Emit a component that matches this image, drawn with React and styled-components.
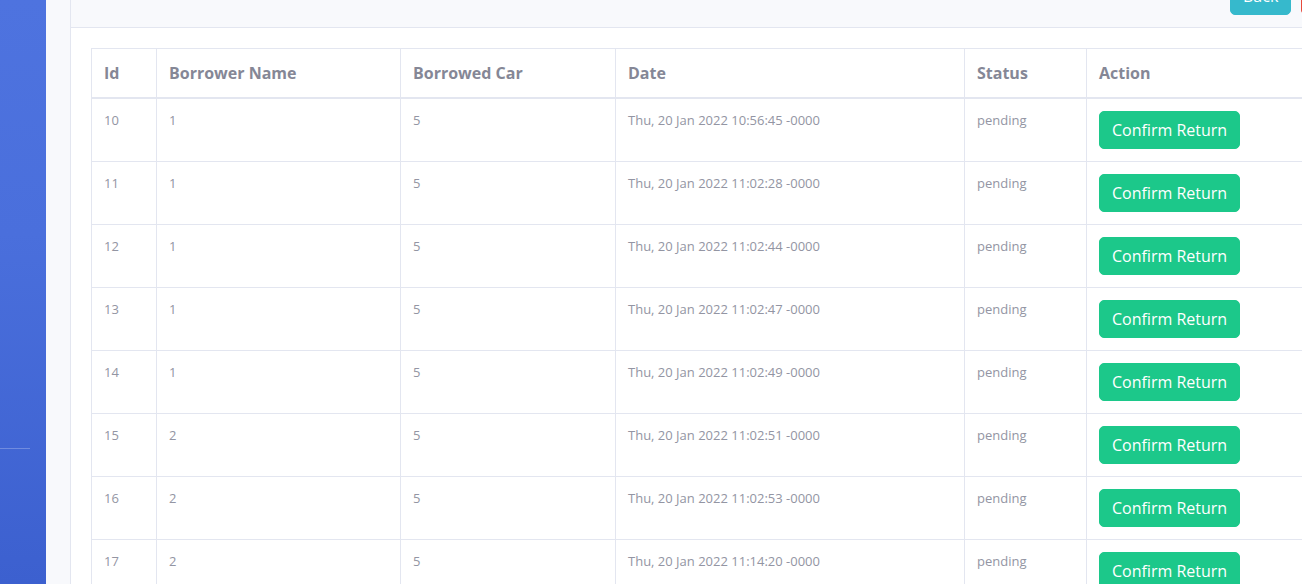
import React from "react";
import styled, { createGlobalStyle } from "styled-components";

const GlobalStyle = createGlobalStyle`
  html, body {
    margin: 0;
    padding: 0;
    overflow: hidden;
    background: #f8f9fc;
  }
  body {
    font-family: "Open Sans", "Noto Sans", sans-serif;
  }
  * { box-sizing: border-box; }
`;

const Wrapper = styled.div`
  display: flex;
  width: 1302px;
  height: 584px;
  overflow: hidden;
`;

const Sidebar = styled.aside`
  flex: 0 0 46px;
  height: 100%;
  background: linear-gradient(180deg, #4e73df 0%, #4a6fdc 40%, #3c60cf 100%);
  display: flex;
  flex-direction: column;
  padding-top: 448px;
`;

const Divider = styled.hr`
  margin: 0 16px 0 0;
  border: 0;
  border-top: 1px solid rgba(255, 255, 255, 0.25);
  height: 0;
`;

const Content = styled.main`
  flex: 1 1 auto;
  min-width: 0;
  padding: 0 0 0 24px;
  background: #f8f9fc;
  overflow: hidden;
`;

const Card = styled.section`
  width: 1400px;
  background: #fff;
  border-left: 1px solid #e3e6f0;
`;

const CardHeader = styled.header`
  height: 28px;
  background: #f8f9fc;
  border-bottom: 1px solid #e3e6f0;
  display: flex;
  align-items: flex-end;
  padding: 0 0 12px 1159px;
  gap: 10px;
  overflow: hidden;
`;

const HeaderButton = styled.button`
  flex: 0 0 auto;
  height: 38px;
  padding: 6px 12px;
  border: 1px solid ${(p) => p.$bg};
  border-radius: 5px;
  background: ${(p) => p.$bg};
  color: #fff;
  font-family: inherit;
  font-size: 16px;
  line-height: 24px;
  width: ${(p) => p.$w}px;
`;

const CardBody = styled.div`
  padding: 20px 20px 0 20px;
`;

const Table = styled.table`
  border-collapse: collapse;
  table-layout: fixed;
  width: 1320px;
  color: #858796;
`;

const Th = styled.th`
  text-align: left;
  font-size: 16px;
  font-weight: 700;
  line-height: 24px;
  padding: 12px;
  border: 1px solid #e3e6f0;
  border-bottom: 2px solid #e3e6f0;
  vertical-align: bottom;
  width: ${(p) => p.$w}px;
  color: #858796;
`;

const Td = styled.td`
  font-size: 13px;
  line-height: 19px;
  padding: 12px;
  border: 1px solid #e3e6f0;
  vertical-align: top;
  color: #9395a3;
  height: 63px;
`;

const ActionTd = styled(Td)`
  padding: 12px;
`;

const ConfirmButton = styled.button`
  height: 38px;
  padding: 6px 12px;
  border: 1px solid #1cc88a;
  border-radius: 5px;
  background: #1cc88a;
  color: #fff;
  font-family: inherit;
  font-size: 16px;
  line-height: 24px;
  cursor: pointer;
`;

const rows = [
  { id: 10, name: 1, car: 5, date: "Thu, 20 Jan 2022 10:56:45 -0000" },
  { id: 11, name: 1, car: 5, date: "Thu, 20 Jan 2022 11:02:28 -0000" },
  { id: 12, name: 1, car: 5, date: "Thu, 20 Jan 2022 11:02:44 -0000" },
  { id: 13, name: 1, car: 5, date: "Thu, 20 Jan 2022 11:02:47 -0000" },
  { id: 14, name: 1, car: 5, date: "Thu, 20 Jan 2022 11:02:49 -0000" },
  { id: 15, name: 2, car: 5, date: "Thu, 20 Jan 2022 11:02:51 -0000" },
  { id: 16, name: 2, car: 5, date: "Thu, 20 Jan 2022 11:02:53 -0000" },
  { id: 17, name: 2, car: 5, date: "Thu, 20 Jan 2022 11:14:20 -0000" },
];

export default function App() {
  return (
    <>
      <GlobalStyle />
      <Wrapper>
        <Sidebar>
          <Divider />
        </Sidebar>
        <Content>
          <Card>
            <CardHeader>
              <HeaderButton $bg="#36b9cc" $w={61}>Back</HeaderButton>
              <HeaderButton $bg="#e74a3b" $w={80}>Logout</HeaderButton>
            </CardHeader>
            <CardBody>
              <Table>
                <thead>
                  <tr>
                    <Th $w={65}>Id</Th>
                    <Th $w={244}>Borrower Name</Th>
                    <Th $w={215}>Borrowed Car</Th>
                    <Th $w={349}>Date</Th>
                    <Th $w={122}>Status</Th>
                    <Th $w={325}>Action</Th>
                  </tr>
                </thead>
                <tbody>
                  {rows.map((r) => (
                    <tr key={r.id}>
                      <Td>{r.id}</Td>
                      <Td>{r.name}</Td>
                      <Td>{r.car}</Td>
                      <Td>{r.date}</Td>
                      <Td>pending</Td>
                      <ActionTd>
                        <ConfirmButton>Confirm Return</ConfirmButton>
                      </ActionTd>
                    </tr>
                  ))}
                </tbody>
              </Table>
            </CardBody>
          </Card>
        </Content>
      </Wrapper>
    </>
  );
}
